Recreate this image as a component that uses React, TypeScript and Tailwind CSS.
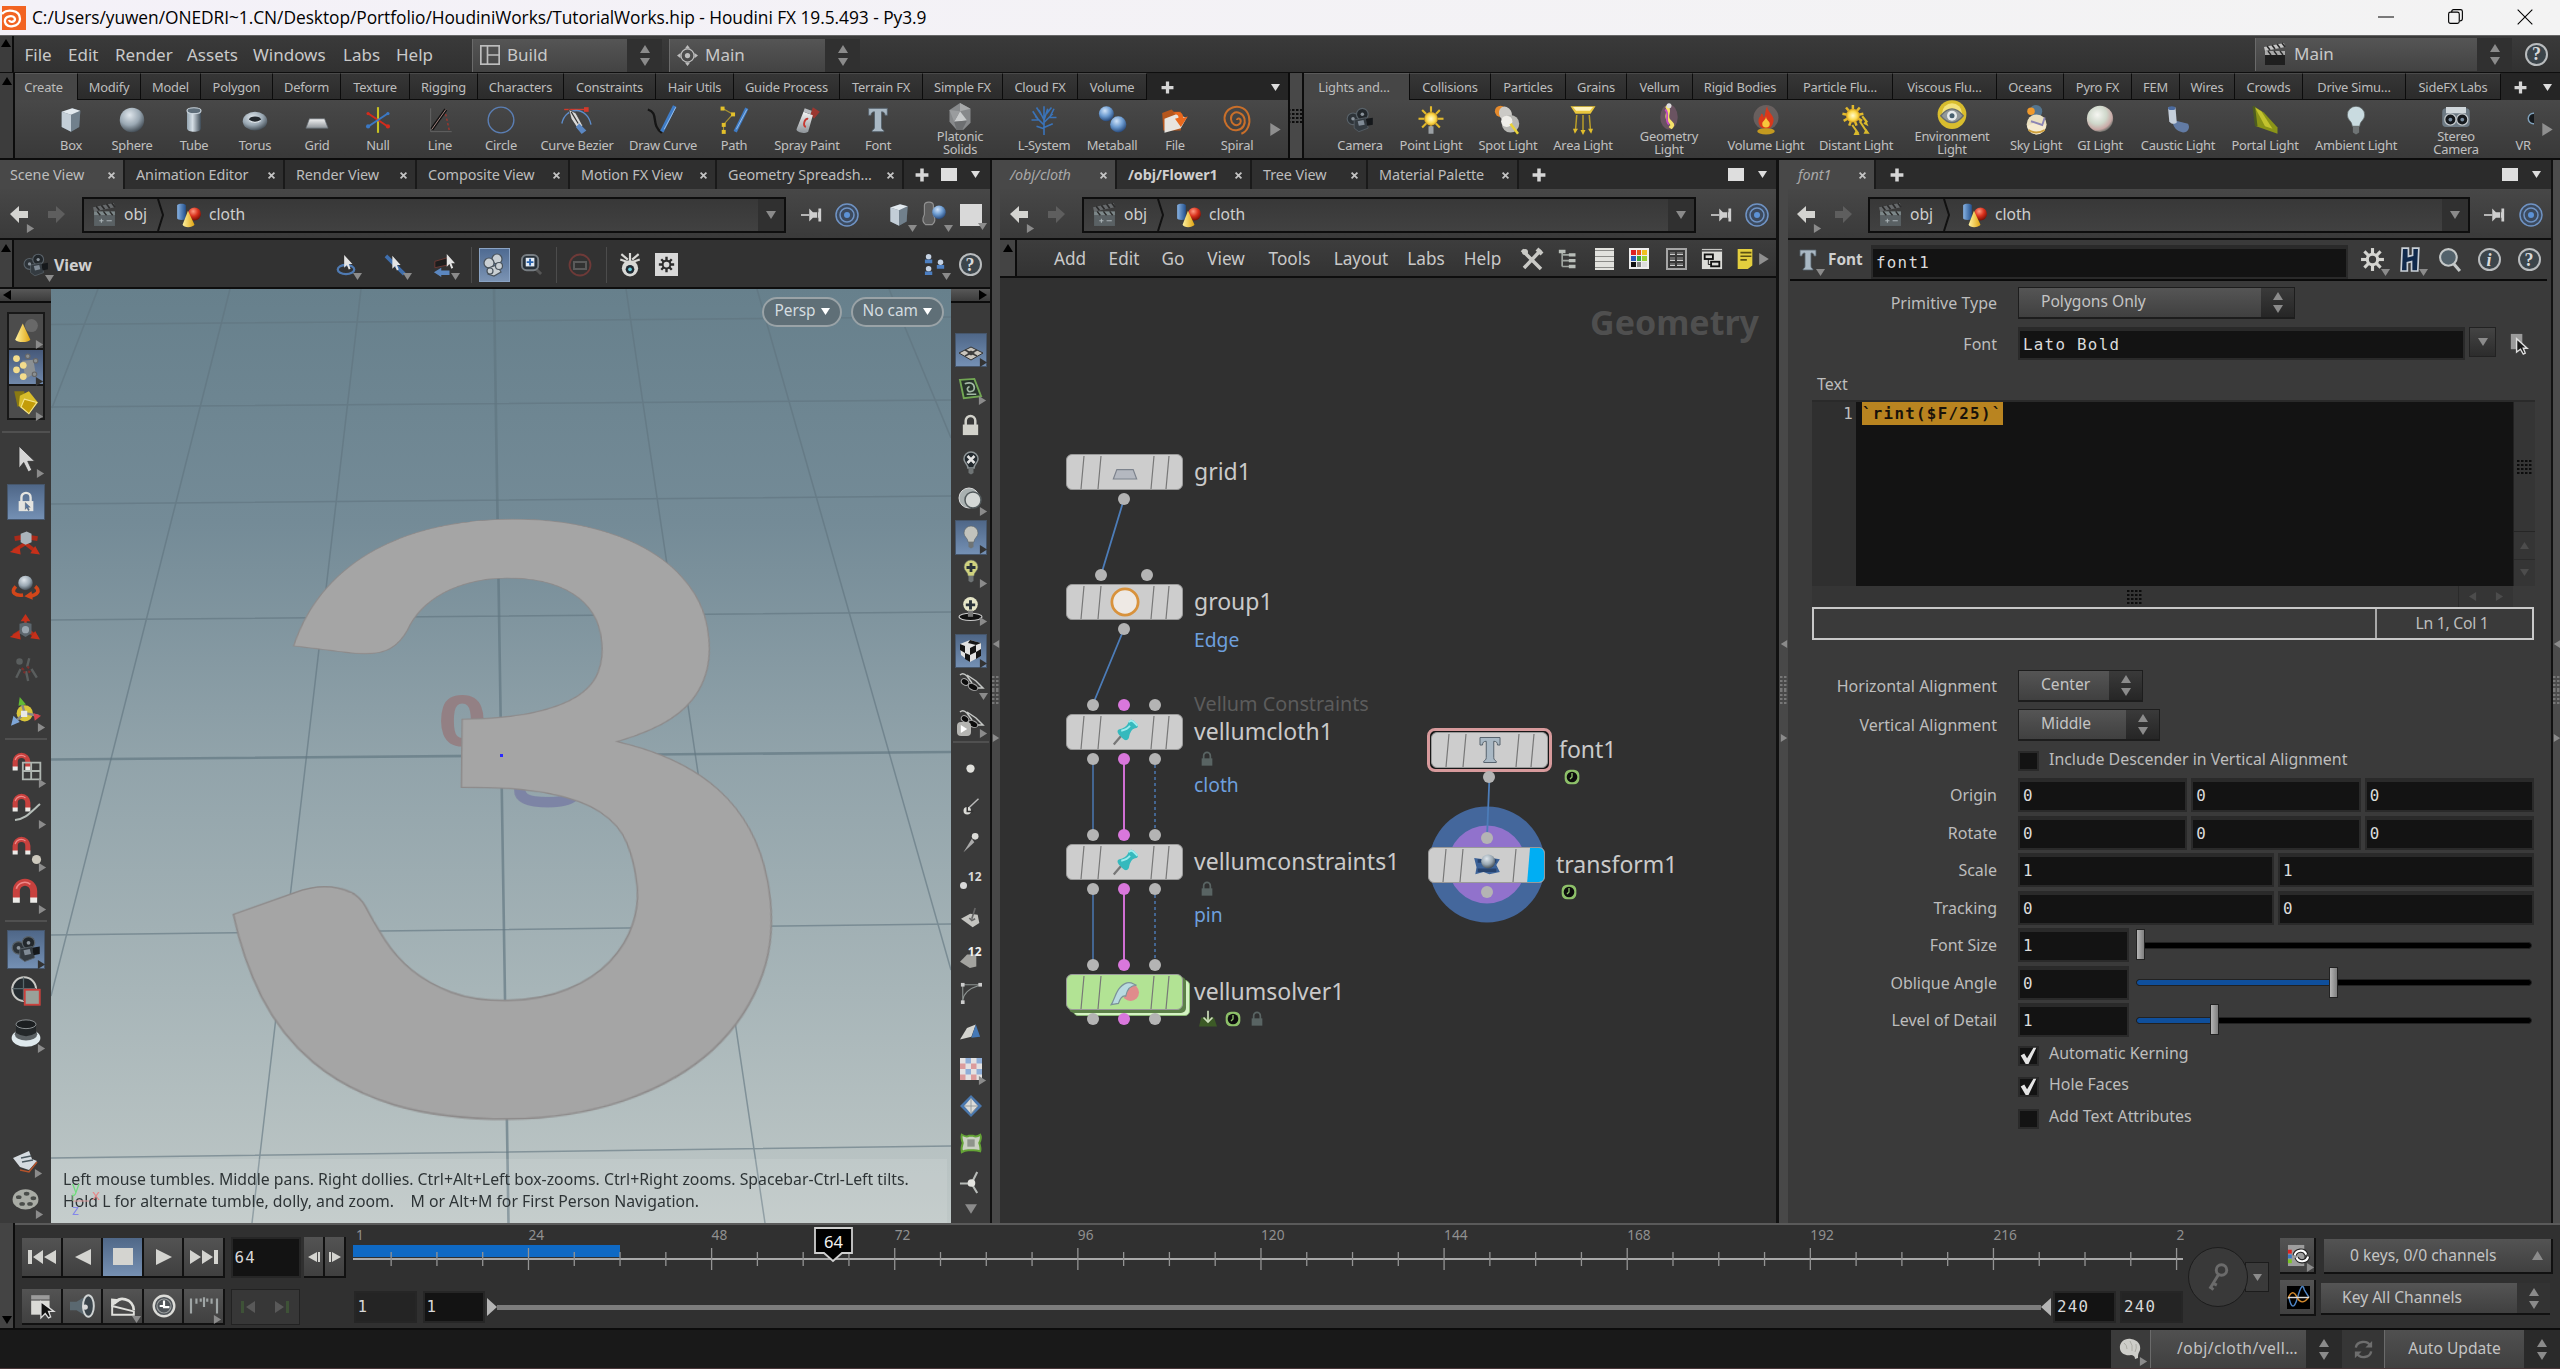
import React from "react";

type N = React.ReactNode;

/* ---------- drawing helpers ---------- */

const Ic = ({ s = 28, children }: { s?: number; children: N }) => (
  <svg width={s} height={s} viewBox="0 0 24 24" className="shrink-0 overflow-visible" fill="none">
    {children}
  </svg>
);

const Defs = () => (
  <svg width="0" height="0" className="absolute">
    <defs>
      <radialGradient id="ball" cx=".4" cy=".3" r=".75">
        <stop offset="0" stopColor="#dfe6ec" />
        <stop offset=".55" stopColor="#9aa8b3" />
        <stop offset="1" stopColor="#39424a" />
      </radialGradient>
      <radialGradient id="blueball" cx=".4" cy=".3" r=".75">
        <stop offset="0" stopColor="#cfe2f8" />
        <stop offset=".5" stopColor="#6c9bd0" />
        <stop offset="1" stopColor="#1f3f70" />
      </radialGradient>
      <radialGradient id="redball" cx=".4" cy=".3" r=".75">
        <stop offset="0" stopColor="#ff9a80" />
        <stop offset=".5" stopColor="#d9301c" />
        <stop offset="1" stopColor="#6a0c04" />
      </radialGradient>
      <radialGradient id="yball" cx=".5" cy=".5" r=".55">
        <stop offset="0" stopColor="#fffbd0" />
        <stop offset=".6" stopColor="#fbd84a" />
        <stop offset="1" stopColor="#c88c12" />
      </radialGradient>
      <radialGradient id="giball" cx=".4" cy=".35" r=".7">
        <stop offset="0" stopColor="#f6f6f2" />
        <stop offset=".5" stopColor="#cfd8cb" />
        <stop offset=".8" stopColor="#c9a9a6" />
        <stop offset="1" stopColor="#54605a" />
      </radialGradient>
      <linearGradient id="steel" x1="0" x2="1">
        <stop offset="0" stopColor="#93a4b0" />
        <stop offset=".4" stopColor="#d5dee5" />
        <stop offset="1" stopColor="#3d4a55" />
      </linearGradient>
      <linearGradient id="silver" x1="0" y1="0" x2="0" y2="1">
        <stop offset="0" stopColor="#f4f4f4" />
        <stop offset="1" stopColor="#8e9499" />
      </linearGradient>
      <linearGradient id="bluecyl" x1="0" x2="1">
        <stop offset="0" stopColor="#87b3e4" />
        <stop offset="1" stopColor="#23508c" />
      </linearGradient>
      <linearGradient id="cone" x1="0" x2="1">
        <stop offset="0" stopColor="#fff2a0" />
        <stop offset="1" stopColor="#e0a411" />
      </linearGradient>
      <linearGradient id="sky" x1="0" y1="0" x2="0" y2="1">
        <stop offset="0" stopColor="#67808c" />
        <stop offset=".25" stopColor="#748b97" />
        <stop offset=".5" stopColor="#91a3aa" />
        <stop offset=".75" stopColor="#a7b5b8" />
        <stop offset="1" stopColor="#bfc8c7" />
      </linearGradient>
    </defs>
  </svg>
);

const Tri = ({ d = "r", s = 8, c = "#8b8b8b" }: { d?: "r" | "l" | "u" | "d"; s?: number; c?: string }) => {
  const p = { r: "1,0 9,5 1,10", l: "9,0 1,5 9,10", u: "0,9 5,1 10,9", d: "0,1 10,1 5,9" }[d];
  return (
    <svg width={s} height={s} viewBox="0 0 10 10" className="shrink-0" preserveAspectRatio="none">
      <polygon points={p} fill={c} />
    </svg>
  );
};

/* An icon with a small menu marker in its lower right corner. */
const Menu = ({ children, d = "r", c = "#8b8b8b" }: { children: N; d?: "r" | "d"; c?: string }) => (
  <span className="relative flex items-center justify-center">
    {children}
    <span className="absolute -right-[5px] -bottom-[5px]">
      <Tri d={d} s={9} c={c} />
    </span>
  </span>
);

/* Lays children out on given centre lines inside a flex row or column. */
const Track = ({ at, from = 0, children, start, className = "" }: { at: number[]; from?: number; children: N; start?: boolean; className?: string }) => (
  <div className={"flex items-center " + className}>
    {React.Children.toArray(children).map((c, i) => (
      <div
        key={i}
        className={"flex w-0 shrink-0 items-center whitespace-nowrap [&>*]:shrink-0 " + (start ? "justify-start" : "justify-center")}
        style={{ marginLeft: at[i] - (i ? at[i - 1] : from) }}
      >
        {c}
      </div>
    ))}
  </div>
);

const VTrack = ({ at, from = 0, children, className = "" }: { at: number[]; from?: number; children: N; className?: string }) => (
  <div className={"flex flex-col items-center " + className}>
    {React.Children.toArray(children).map((c, i) => (
      <div key={i} className="flex h-0 shrink-0 items-center justify-center [&>*]:shrink-0" style={{ marginTop: at[i] - (i ? at[i - 1] : from) }}>
        {c}
      </div>
    ))}
  </div>
);

/* ---------- icons ---------- */

const Cube = ({ s = 28 }: { s?: number }) => (
  <Ic s={s}>
    <path d="M4 5l9-3 7 2-1 14-7 4-8-4z" fill="#55626d" />
    <path d="M4 5l8 2.500v14.500l-8-4z" fill="#c3ced7" />
    <path d="M12 7.500l8-3.500-1 14-7 4z" fill="#71808c" />
    <path d="M4 5l9-3 7 2-8 3.500z" fill="#e2e9ee" />
  </Ic>
);
const Sphere = () => (<Ic><circle cx="12" cy="12" r="10.500" fill="url(#ball)" /></Ic>);
const Tube = () => (
  <Ic>
    <path d="M6 4v15c0 4 12 4 12 0V4z" fill="url(#steel)" />
    <ellipse cx="12" cy="4" rx="6" ry="2.500" fill="#5e6d79" stroke="#c8d2da" strokeWidth="1" />
  </Ic>
);
const Torus = () => (
  <Ic>
    <ellipse cx="12" cy="13" rx="10.500" ry="8" fill="url(#ball)" />
    <ellipse cx="12" cy="11.500" rx="5" ry="2.500" fill="#23282d" />
    <path d="M7 12.500q5 3 10 0" stroke="#dde4ea" />
  </Ic>
);
const GridIc = () => (<Ic><path d="M5.500 11h13l3 8h-19z" fill="url(#silver)" stroke="#636b72" strokeWidth=".6" /></Ic>);
const NullIc = () => (
  <Ic>
    <path d="M12 1v22" stroke="#c7c224" strokeWidth="1.800" />
    <path d="M3 6l18 12" stroke="#d32b1c" strokeWidth="1.800" />
    <path d="M3 18L21 6" stroke="#3b78c4" strokeWidth="1.800" />
    <circle cx="3.500" cy="6.500" r="1.400" fill="#d32b1c" /><circle cx="20.500" cy="17.500" r="1.800" fill="#d32b1c" />
    <circle cx="3.500" cy="17.500" r="1.800" fill="#3b78c4" /><circle cx="20.500" cy="6.500" r="1.400" fill="#3b78c4" />
  </Ic>
);
const LineIc = () => (
  <Ic>
    <path d="M4 2v20h18" stroke="#6b6b6b" strokeWidth=".7" />
    <path d="M16 3l4 18" stroke="#b3342a" strokeDasharray="2 2" />
    <path d="M5 20L17 3" stroke="#111" strokeWidth="3" /><path d="M5 20L17 3" stroke="#b08f8b" strokeWidth=".8" />
  </Ic>
);
const CircleIc = () => (<Ic><circle cx="12" cy="12" r="11" stroke="#5b7fb5" strokeWidth="1.200" /></Ic>);
const BezierIc = () => (
  <Ic>
    <path d="M1 3h20" stroke="#d33a2b" strokeWidth="1.200" /><rect x="18" y="1" width="4" height="4" fill="#d33a2b" />
    <path d="M-1 15C2 0 21 0 24 16" stroke="#5e8cc9" strokeWidth="1.200" />
    <path d="M5 3l6 3 6 11-4 3-6-9z" fill="#d8d8d8" stroke="#333" strokeWidth=".6" />
    <path d="M7 5l6 10" stroke="#333" strokeWidth="1" />
    <path d="M14 15l6 6-4 3-5-6z" fill="#5b87c2" />
  </Ic>
);
const DrawIc = () => (
  <Ic>
    <path d="M-1 3c10 3 2 13 12 20" stroke="#151515" strokeWidth="2" />
    <path d="M22 0l-11 22" stroke="#3f7cc6" strokeWidth="3.200" /><path d="M23 1L13 20" stroke="#9cc2ec" strokeWidth=".8" />
  </Ic>
);
const PathIc = () => (
  <Ic>
    <path d="M2 2l9 5-8 9v6" stroke="#a99433" strokeWidth="1" />
    {[[2, 2], [11, 7], [3, 16], [3, 22]].map(([x, y]) => (<rect key={y} x={x - 1.500} y={y - 1.500} width="3.400" height="3.400" fill="#e3c02a" />))}
    <path d="M23 2L13 22" stroke="#3f7cc6" strokeWidth="3" /><path d="M23 3L14 20" stroke="#9cc2ec" strokeWidth=".8" />
  </Ic>
);
const SprayIc = () => (
  <Ic>
    <path d="M17 1l6 4-5 6-3-4z" fill="#b0332c" opacity=".8" />
    <path d="M9 5l8 3-4 14c-3 2-10 1-10-2z" fill="url(#silver)" /><path d="M10 2l6 2-1 3-6-2z" fill="#b9bcc0" />
    <path d="M13 11c-3-1-5 6-2 7" stroke="#c63a33" strokeWidth="1.600" />
  </Ic>
);
const TIc = ({ s = 28 }: { s?: number }) => (
  <Ic s={s}>
    <path d="M4 2h16v6h-2c0-2-1-3-3-3v13c0 2 1 2 2 3v1H7v-1c1-1 2-1 2-3V5C7 5 6 6 6 8H4z" fill="#a9b8c4" stroke="#56626c" strokeWidth=".8" />
  </Ic>
);
const PlatIc = () => (
  <Ic>
    <path d="M12 0l9 5v12l-6 6H9l-6-7V6z" fill="#87898b" />
    <path d="M12 7l6 8-11 1z" fill="#c9cbcc" /><path d="M12 0l9 5-9 2z" fill="#a7a9aa" /><path d="M3 6l9 1-5 9z" fill="#9a9c9e" />
    <path d="M7 16l11-1-4 8H9z" fill="#6d6f71" />
  </Ic>
);
const LSysIc = () => (
  <Ic s={30}>
    <path d="M12 24V12M12 16L5 9M12 14l7-7M12 12L8 4M12 12l3-9M8 12H2M7 11L3 5M10 8L6 2M16 10h6M17 9l3-6M14 7l4-5M12 19l-6-2M12 18l7-3M12 12V1" stroke="#3a73b8" strokeWidth="1.300" />
  </Ic>
);
const MetaIc = () => (<Ic s={30}><circle cx="7.500" cy="7" r="6" fill="url(#blueball)" /><circle cx="17" cy="15.500" r="6.500" fill="url(#blueball)" /></Ic>);
const FileIc = () => (
  <Ic>
    <path d="M1 6l8-3 2 2 6 0v16H2z" fill="#b5561c" />
    <path d="M3 11l10-4 9 3-5 9-14 4z" fill="#e8e4de" /><path d="M10 6c6-2 9 0 9 4l4-1-6 9-5-7 3-1c0-2-1-3-5-4z" fill="#e8681d" />
  </Ic>
);
const SpiralIc = () => (
  <Ic s={30}>
    <path d="M12 12c0-2 3-1.500 3 1s-3 4-5.500 2.500S6 9 9 6.800s8 0 9 4.200-1 8-5.500 9S4 18 2.500 13.500 3 4 8.500 2 20 3 21.500 9s-1 12-6 14" stroke="#c96f2a" strokeWidth="1.600" />
  </Ic>
);
const CamIc = ({ s = 28 }: { s?: number }) => (
  <Ic s={s}>
    <circle cx="6" cy="11" r="5" fill="#2d3338" stroke="#596269" /><circle cx="14" cy="7" r="5" fill="#22272b" stroke="#596269" />
    <path d="M7 12l10-2 2 9-8 3-4-3z" fill="#343b41" stroke="#596269" strokeWidth=".7" /><path d="M17 11l6-1v6l-5 1z" fill="#15181b" />
    <path d="M10 13l5-1 1 4-5 1z" fill="#808b96" /><circle cx="6" cy="11" r="1.500" fill="#8a939b" /><circle cx="14" cy="7" r="1.500" fill="#8a939b" />
  </Ic>
);
const SunIc = ({ base }: { base?: boolean }) => (
  <Ic s={30}>
    {Array.from({ length: 8 }, (_, i) => (
      <path key={i} d="M12 5.500V1" stroke="#e2b92c" strokeWidth="1.700" transform={"rotate(" + i * 45 + " 12 11)"} />
    ))}
    <circle cx="12" cy="11" r="5.500" fill="url(#yball)" />{base && <path d="M10 17h4v6h-4z" fill="#9ba0a4" />}
  </Ic>
);
const SpotIc = () => (
  <Ic s={30}>
    <circle cx="6" cy="5" r="4.500" fill="#e58a2c" /><ellipse cx="10" cy="7" rx="5" ry="6" fill="#cbcac6" transform="rotate(-30 10 7)" />
    <circle cx="14" cy="15" r="7" fill="#b8b8b4" /><circle cx="11" cy="13" r="4.500" fill="#efeee9" /><path d="M14 15l6 8" stroke="#e9d238" strokeWidth="2" />
  </Ic>
);
const AreaIc = () => (
  <Ic s={30}>
    <path d="M2 1h20l-4 6H6z" fill="#e9c63d" /><path d="M4 1.500h16l-2.500 3h-11z" fill="#fff4bd" />
    <path d="M7 8l-1 12M12 8v13M17 8l1 12" stroke="#b99d28" strokeWidth="1.200" />
    <path d="M4 19h4L5.500 23zM10 20h4L12 24zM16 19h4L18.500 23z" fill="#e0bd2c" />
  </Ic>
);
const GeoLightIc = () => (
  <Ic s={30}>
    <ellipse cx="12" cy="12" rx="7" ry="10" fill="#6a5361" /><path d="M10 3c4 4-2 8 2 12s3 3 1 6" stroke="#f6e36a" strokeWidth="3" />
    <path d="M9 6c4 4-1 8 3 12" stroke="#c04bc0" strokeWidth="1.500" /><circle cx="12" cy="3" r="2" fill="#ddd" />
  </Ic>
);
const FireIc = () => (
  <Ic s={30}>
    <circle cx="12" cy="10" r="10" fill="#8b7a78" opacity=".5" />
    <path d="M13 1c0 5 6 7 5 12s-3 6-6 6-6-2-6-6 2-3 2-6c2 0 2 2 2 3 2-2 1-6 3-9z" fill="#d8381b" />
    <path d="M12 9c0 3 3 4 3 6s-1 3-3 3-3-1-3-3 3-3 3-6z" fill="#f8c63b" /><ellipse cx="12" cy="21" rx="7" ry="2.500" fill="#c49a20" />
  </Ic>
);
const DistIc = () => (
  <Ic s={30}>
    {Array.from({ length: 9 }, (_, i) => (<path key={i} d="M9.500 4V0" stroke="#e2b92c" strokeWidth="2" transform={"rotate(" + i * 40 + " 9.500 8.500)"} />))}
    <circle cx="9.500" cy="8.500" r="5.500" fill="url(#yball)" /><path d="M17 9l4 5M15 13l6 9M9 16l5 7" stroke="#d9b92c" strokeWidth="1.700" />
    <path d="M20 12l2 5-4-2zM20 19l3 4h-5zM12 20l3 4h-5z" fill="#d9b92c" />
  </Ic>
);
const EnvIc = () => (
  <Ic s={30}>
    <circle cx="12" cy="10" r="11.500" fill="#d8bd2e" /><circle cx="12" cy="9" r="8" fill="#f3e27a" /><path d="M3 11q9-11 18 0-9 11-18 0z" fill="#92989a" stroke="#666c6f" />
    <circle cx="12" cy="11" r="4" fill="#e7ebec" /><circle cx="12" cy="11" r="2" fill="#48606f" />
  </Ic>
);
const SkyIc = () => (
  <Ic s={30}>
    <circle cx="12" cy="5" r="5" fill="#54748e" /><circle cx="8" cy="5" r="3" fill="#f0992b" /><circle cx="12.500" cy="15.500" r="8" fill="#e9dfc0" />
    <path d="M5 17q7-5 15-1-1 7-8 7.500-5-1-7-6.500z" fill="#f5ead0" /><path d="M8 13l9 3 2-6" stroke="#8c86b4" strokeWidth="1.500" /><path d="M6 20q6 4 13 0" stroke="#cc9e3c" strokeWidth="1.500" />
  </Ic>
);
const GiIc = () => (<Ic s={30}><circle cx="12" cy="11" r="10.500" fill="url(#giball)" /></Ic>);
const CausIc = () => (
  <Ic s={30}>
    <path d="M8 12l12 3c2 3 0 7-4 7-5-1-9-5-8-10z" fill="#6d8fc6" opacity=".75" /><path d="M4 2h6l1 12c-2 2-5 1-6-1z" fill="#c5cfdb" />
    <ellipse cx="7" cy="2.500" rx="3" ry="1.500" fill="#4b6ba0" />
  </Ic>
);
const PortIc = () => (<Ic s={30}><path d="M3 1l8 5 11 12v5L5 17z" fill="#8a9418" /><path d="M4 2l5 3 9 14-6-2z" fill="#c2c22e" /><path d="M3 1l2 16" stroke="#4c5d1f" strokeWidth="2" /></Ic>);
const BulbIc = ({ s = 30, f = "#c9dbe0", line = "#5b6163", lw = 0.6, x }: { s?: number; f?: string; line?: string; lw?: number; x?: N }) => (
  <Ic s={s}>
    <path d="M12 1a7 7 0 0 0-7 7c0 4 4 5 4 9h6c0-4 4-5 4-9a7 7 0 0 0-7-7z" fill={f} stroke={line} strokeWidth={lw} />
    <path d="M9.500 17h5v5l-2.500 1.500L9.500 22z" fill="#6f7475" />{x}
  </Ic>
);
const StereoIc = () => (
  <Ic s={30}>
    <rect x="1" y="5" width="22" height="15" rx="3" fill="#6c7983" /><rect x="4" y="4" width="16" height="5" fill="#cfd6da" />
    <circle cx="7.500" cy="14" r="4.500" fill="#15191d" stroke="#c4c9cc" /><circle cx="17" cy="14" r="4.500" fill="#15191d" stroke="#c4c9cc" />
    <circle cx="7.500" cy="14" r="1.500" fill="#7b8ea0" /><circle cx="17" cy="14" r="1.500" fill="#7b8ea0" />
  </Ic>
);
const Plus = ({ s = 15 }: { s?: number }) => (<Ic s={s}><path d="M12 1v22M1 12h22" stroke="#d6d6d6" strokeWidth="6" /></Ic>);
const HelpIc = ({ ch = "?" }: { ch?: string }) => (
  <span className={"flex size-[23px] items-center justify-center rounded-full border-2 border-[#b9bcbe] bg-[#3b444a] font-['Liberation_Serif',serif] text-[18px] leading-none font-bold text-[#d8dadb] " + (ch === "i" ? "italic" : "")}>{ch}</span>
);
const Back = ({ dim }: { dim?: boolean }) => (
  <Ic s={24}><path d={dim ? "M21 11l-9-8v5H4v7h8v5z" : "M2 11l9-8v5h9v7h-9v5z"} fill={dim ? "#5e5e5e" : "#d3d3d0"} /></Ic>
);
const ClapIc = ({ s = 26, lit }: { s?: number; lit?: boolean }) => (
  <Ic s={s}>
    <path d="M1 5l20-4 1 4-20 4z" fill={lit ? "#c4c4c4" : "#66696b"} /><path d="M4 4l3 4M9 3l3 4M14 2l3 4M19 1l3 4" stroke="#2b2b2b" strokeWidth="1.600" />
    <rect x="2" y="9" width="20" height="4" fill={lit ? "#aaa" : "#7d888a"} /><path d="M5 9l3 4M11 9l3 4M17 9l3 4" stroke="#2b2b2b" strokeWidth="1.400" />
    <rect x="2" y="13" width="20" height="10" fill={lit ? "#1f1f1f" : "#5a6164"} />{!lit && <path d="M9 16v4M7 18h4M14 18h5" stroke="#aab3b6" />}
  </Ic>
);
const ShapesIc = () => (
  <Ic s={26}>
    <path d="M2 3v12c0 2 8 2 8 0V3c0-2-8-2-8 0z" fill="url(#bluecyl)" /><circle cx="18" cy="11" r="6" fill="url(#redball)" />
    <path d="M12 8l6 13c-2 3-10 3-11 0z" fill="url(#cone)" />
  </Ic>
);
const PinIc = () => (<Ic s={22}><path d="M0 12h9" stroke="#cfcfcf" strokeWidth="1.800" /><path d="M9 5l4 4h6V5h3v14h-3v-4h-6l-4 4z" fill="#cfcfcf" /><path d="M18 8v8" stroke="#555" strokeWidth="1" /></Ic>);
const TargetIc = () => (
  <Ic s={24}><circle cx="12" cy="12" r="11" fill="#3c4a5e" stroke="#6f93c4" strokeWidth="1.500" /><circle cx="12" cy="12" r="7" stroke="#6f93c4" strokeWidth="1.500" /><circle cx="12" cy="12" r="3" fill="#5c92d6" /></Ic>
);
const LockIc = ({ s = 24, c = "#e4e4e0" }: { s?: number; c?: string }) => (
  <Ic s={s}><path d="M7 12V7a5 5 0 0 1 10 0v5" stroke={c} strokeWidth="2.600" /><rect x="4" y="11" width="16" height="11" fill={c} /></Ic>
);
const Magnet = ({ s = 20 }: { s?: number }) => (
  <Ic s={s}>
    <path d="M4 18V11a8 8 0 0 1 16 0v7" stroke="#c8413e" strokeWidth="6.500" /><path d="M4 9a8 8 0 0 1 13-4" stroke="#e88" strokeWidth="1.500" />
    <path d="M.8 17h6.400v5H.8zM16.800 17h6.400v5h-6.400z" fill="#ecebe8" />
  </Ic>
);
const Arrow = ({ s = 26, c = "#d4d4d4" }: { s?: number; c?: string }) => (<Ic s={s}><path d="M6 1v19l4-5 4 8 3-1.500-3.500-7.500h6z" fill={c} stroke="#333" strokeWidth=".7" /></Ic>);
const Updown = () => (
  <span className="flex flex-col items-center gap-[3px]"><Tri d="u" s={10} /><Tri d="d" s={10} /></span>
);
const Grip = ({ dark }: { dark?: boolean }) => (
  <svg width="16" height="14" viewBox="0 0 16 14" className="shrink-0">
    {[0, 4, 8, 12].map((x) => [0, 4, 8, 12].map((y) => (<rect key={x + "-" + y} x={x} y={y} width="2.500" height="2" fill={dark ? "#0c0c0c" : "#777"} />)))}
  </svg>
);

/* ---------- top bars ---------- */

const TitleBar = () => (
  <div className="flex h-[35px] shrink-0 items-center bg-gradient-to-r from-[#f4f1f8] to-[#f3f3f3] text-black">
    <div className="ml-[2px] flex h-[24px] w-[24px] items-center justify-center overflow-hidden bg-[#f26322]">
      <Ic s={24}><path d="M0 8c4-5 18-5 18 5 0 8-14 10-15 3-1-6 9-8 10-3 0 3-5 4-6 1" stroke="#fff" strokeWidth="2.300" /></Ic>
    </div>
    <span className="ml-[6px] font-['Open_Sans',sans-serif] text-[17.35px] tracking-[-0.05px]">
      C:/Users/yuwen/ONEDRI~1.CN/Desktop/Portfolio/HoudiniWorks/TutorialWorks.hip - Houdini FX 19.5.493 - Py3.9
    </span>
    <div className="mr-[27px] ml-auto flex items-center gap-[54px] pb-[2px]">
      <Ic s={16}><path d="M0 12h24" stroke="#000" strokeWidth="1.500" /></Ic>
      <Ic s={15}><rect x="1" y="5" width="17" height="18" rx="3" stroke="#000" strokeWidth="1.800" /><path d="M6 5V4q0-3 3-3h11q3 0 3 3v11q0 4-4 4" stroke="#000" strokeWidth="1.800" /></Ic>
      <Ic s={16}><path d="M1 1l22 22M23 1L1 23" stroke="#000" strokeWidth="1.600" /></Ic>
    </div>
  </div>
);

const Combo = ({ icon, text, w, h = "h-[33px]" }: { icon: N; text: string; w: string; h?: string }) => (
  <div className={"flex shrink-0 items-stretch " + w + " " + h}>
    <div className="flex flex-1 items-center gap-[7px] border-l border-[#6a6a6a] bg-gradient-to-b from-[#555] to-[#434343] pl-[7px] text-[17px]">{icon}{text}</div>
    <div className="flex w-[35px] items-center justify-center bg-[#303030]"><Updown /></div>
  </div>
);

const MenuBar = () => (
  <div className="flex h-[38px] shrink-0 items-center border-t border-b border-t-[#666] border-b-[#0e0e0e] bg-gradient-to-b from-[#3a3a3a] to-[#313131]">
    <div className="flex h-full w-[14px] items-start justify-center border-r-2 border-[#0c0c0c] bg-[#3c3c3c] pt-[2px]"><Tri d="u" s={10} c="#000" /></div>
    <Track at={[24.500, 68, 115, 187, 253, 343, 396]} from={14} start className="w-[458px] pt-px text-[17px] text-[#c9c9c9]">
      {["File", "Edit", "Render", "Assets", "Windows", "Labs", "Help"].map((m) => (<span key={m}>{m}</span>))}
    </Track>
    <div className="flex pt-[2px]">
      <Combo w="w-[190px]" text="Build" icon={<Ic s={20}><rect x="1" y="1" width="22" height="22" stroke="#bdbdbd" strokeWidth="2" /><path d="M9 1v22M9 12h14" stroke="#bdbdbd" strokeWidth="2" /></Ic>} />
      <span className="w-[7px]" />
      <Combo w="w-[191px]" text="Main" icon={<Ic s={21}><circle cx="12" cy="12" r="7.500" stroke="#bdbdbd" strokeWidth="1.500" /><circle cx="12" cy="12" r="3" fill="#bdbdbd" /><path d="M12 0l3 4H9zM12 24l3-4H9zM0 12l4-3v6zM24 12l-4-3v6z" fill="#bdbdbd" /></Ic>} />
    </div>
    <div className="ml-auto flex items-center">
      <Combo w="w-[257px]" text="Main" icon={<ClapIc s={24} lit />} />
      <span className="mr-[12px] ml-[13px]"><HelpIc /></span>
    </div>
  </div>
);

type Tab = [string, number];
const ShelfTabs = ({ tabs, plus }: { tabs: Tab[]; plus: string }) => (
  <div className="flex h-[27px] bg-[#252525] text-[12.9px] tracking-[-0.2px] text-[#bdbdbd]">
    {tabs.map(([t, w], i) => (
      <div
        key={t}
        className={"flex shrink-0 items-center justify-center border-t border-r border-r-[#0c0c0c] pt-[2px] " + (i ? "border-b border-t-[#4a4a4a] border-b-[#0c0c0c] bg-gradient-to-b from-[#363636] to-[#2b2b2b]" : "border-t-[#5a5a5a] bg-[#464646] pr-[5px]")}
        style={{ width: w }}
      >
        {t}
      </div>
    ))}
    <div className={"flex items-center justify-between pt-[2px] " + plus}><Plus s={13} /><Tri d="d" s={9} c="#ddd" /></div>
  </div>
);

const Tool = ({ icon, text }: { icon: N; text: string }) => {
  const two = text.includes("|");
  return (
    <div className={"flex h-[58px] flex-col items-center text-[12.9px] leading-[13px] tracking-[-0.25px] text-[#c0c0c0] " + (two ? "pt-[4px]" : "pt-[6px]")}>
      <div className={"flex items-center " + (two ? "h-[26px]" : "h-[28px]")}>{icon}</div>
      <div className={"text-center " + (two ? "leading-[13px]" : "mt-[5px]")}>{text.split("|").map((l) => (<div key={l}>{l}</div>))}</div>
    </div>
  );
};

const Shelves = () => (
  <div className="flex h-[87px] shrink-0 border-b-2 border-[#0c0c0c]">
    <div className="flex w-[15px] items-start justify-center border-r-2 border-[#0c0c0c] bg-[#3c3c3c] pt-[3px]"><Tri d="u" s={10} c="#000" /></div>
    <div className="w-[1273px]">
      <ShelfTabs
        tabs={[["Create", 63], ["Modify", 63], ["Model", 60], ["Polygon", 72], ["Deform", 68], ["Texture", 69], ["Rigging", 68], ["Characters", 86], ["Constraints", 92], ["Hair Utils", 78], ["Guide Process", 106], ["Terrain FX", 83], ["Simple FX", 80], ["Cloud FX", 75], ["Volume", 69]]}
        plus="ml-[14px] mr-[8px] w-[119px]"
      />
      <div className="bg-gradient-to-b from-[#484848] to-[#393939]">
        <Track from={15} at={[71, 132, 194, 255, 317, 378, 440, 501, 577, 663, 734, 807, 878, 960, 1044, 1112, 1175, 1237, 1275]}>
          <Tool icon={<Cube />} text="Box" />
          <Tool icon={<Sphere />} text="Sphere" />
          <Tool icon={<Tube />} text="Tube" />
          <Tool icon={<Torus />} text="Torus" />
          <Tool icon={<GridIc />} text="Grid" />
          <Tool icon={<NullIc />} text="Null" />
          <Tool icon={<LineIc />} text="Line" />
          <Tool icon={<CircleIc />} text="Circle" />
          <Tool icon={<BezierIc />} text="Curve Bezier" />
          <Tool icon={<DrawIc />} text="Draw Curve" />
          <Tool icon={<PathIc />} text="Path" />
          <Tool icon={<SprayIc />} text="Spray Paint" />
          <Tool icon={<TIc />} text="Font" />
          <Tool icon={<PlatIc />} text="Platonic|Solids" />
          <Tool icon={<LSysIc />} text="L-System" />
          <Tool icon={<MetaIc />} text="Metaball" />
          <Tool icon={<FileIc />} text="File" />
          <Tool icon={<SpiralIc />} text="Spiral" />
          <Tri s={13} c="#8f8f8f" />
        </Track>
      </div>
    </div>
    <div className="flex w-[16px] items-center justify-center border-x-2 border-[#0c0c0c] bg-[#484848]"><Grip dark /></div>
    <div className="w-[1256px]">
      <ShelfTabs
        tabs={[["Lights and…", 106], ["Collisions", 81], ["Particles", 75], ["Grains", 61], ["Vellum", 66], ["Rigid Bodies", 95], ["Particle Flu…", 105], ["Viscous Flu…", 104], ["Oceans", 67], ["Pyro FX", 68], ["FEM", 48], ["Wires", 55], ["Crowds", 68], ["Drive Simu…", 103], ["SideFX Labs", 95]]}
        plus="ml-[13px] w-[38px]"
      />
      <div className="flex bg-gradient-to-b from-[#484848] to-[#393939]">
        <div className="w-[1230px] overflow-hidden">
          <Track from={1304} at={[1360, 1431, 1508, 1583, 1669, 1766, 1856, 1952, 2036, 2100, 2178, 2265, 2356, 2456, 2538]}>
            <Tool icon={<CamIc />} text="Camera" />
            <Tool icon={<SunIc base />} text="Point Light" />
            <Tool icon={<SpotIc />} text="Spot Light" />
            <Tool icon={<AreaIc />} text="Area Light" />
            <Tool icon={<GeoLightIc />} text="Geometry|Light" />
            <Tool icon={<FireIc />} text="Volume Light" />
            <Tool icon={<DistIc />} text="Distant Light" />
            <Tool icon={<EnvIc />} text="Environment|Light" />
            <Tool icon={<SkyIc />} text="Sky Light" />
            <Tool icon={<GiIc />} text="GI Light" />
            <Tool icon={<CausIc />} text="Caustic Light" />
            <Tool icon={<PortIc />} text="Portal Light" />
            <Tool icon={<BulbIc />} text="Ambient Light" />
            <Tool icon={<StereoIc />} text="Stereo|Camera" />
            <Tool icon={<Ic s={18}><circle cx="6" cy="10" r="7" stroke="#7fa0ba" strokeWidth="2" fill="#15191d" /></Ic>} text="VR Cam" />
          </Track>
        </div>
        <div className="flex h-[58px] w-[26px] items-center justify-center"><Tri s={13} c="#8f8f8f" /></div>
      </div>
    </div>
  </div>
);

/* ---------- pane chrome ---------- */

const PaneTabs = ({ tabs, styles, end }: { tabs: Tab[]; styles?: string[]; end: string }) => (
  <div className="flex h-[29px] shrink-0 bg-[#2b2b2b] text-[14.4px] text-[#bdbdbd]">
    {tabs.map(([t, w], i) => (
      <div
        key={t}
        className={"flex shrink-0 items-center justify-between border-r-2 border-[#1a1a1a] pt-px pr-[8px] tracking-[-0.1px] whitespace-nowrap " + (i ? "bg-[#2f2f2f] pl-[11px] " : "bg-[#484848] pl-[10px] ") + (styles?.[i] ?? "")}
        style={{ width: w }}
      >
        {t}
        <Ic s={7}><path d="M2 2l20 20M22 2L2 22" stroke="#c4c4c4" strokeWidth="6" /></Ic>
      </div>
    ))}
    <div className={"flex flex-1 items-center " + end}>
      <Plus s={14} />
      <span className="ml-auto h-[13px] w-[16px] bg-[#dedede]" />
      <span className="ml-[14px]"><Tri d="d" s={9} c="#ddd" /></span>
    </div>
  </div>
);

const PathBar = ({ lead, field, tail }: { lead: string; field: string; tail: N }) => (
  <div className="flex h-[51px] shrink-0 items-center border-b-2 border-[#0e0e0e] bg-gradient-to-b from-[#474747] to-[#3a3a3a] pt-[2px]">
    <div className={"flex shrink-0 items-center gap-[12px] " + lead}>
      <span className="relative"><Back /><span className="absolute -right-[3px] -bottom-[6px]"><Tri s={9} /></span></span>
      <Back dim />
    </div>
    <div className={"flex h-[36px] shrink-0 items-center border-2 border-[#0e0e0e] bg-gradient-to-b from-[#383838] to-[#414141] pl-[8px] text-[15.6px] text-[#cfcfcf] " + field}>
      <ClapIc s={25} />
      <span className="ml-[7px] w-[33px]">obj</span>
      <svg width="8" height="32" viewBox="0 0 8 32" fill="none"><path d="M1 0l5 16L1 32" stroke="#111" strokeWidth="2" /></svg>
      <span className="ml-[10px]"><ShapesIc /></span>
      <span className="ml-[8px]">cloth</span>
      <span className="ml-auto flex h-full w-[26px] items-center justify-center bg-[#303030]"><Tri d="d" s={10} c="#8a8a8a" /></span>
    </div>
    {tail}
  </div>
);

/* ---------- 3D viewport ---------- */

const ViewToolbar = () => (
  <div className="flex h-[49px] shrink-0 items-center border-b-2 border-[#0e0e0e] bg-[#323232]">
    <div className="flex h-full w-[14px] items-start justify-center border-r-2 border-[#0c0c0c] bg-[#404040] pt-[3px]"><Tri d="u" s={10} c="#000" /></div>
    <Track className="pt-[2px]" from={14} at={[36, 73, 346, 396, 444, 471, 494, 531, 556, 580, 606, 630, 666, 935, 970]}>
      <Menu d="d"><CamIc s={26} /></Menu>
      <span className="text-[16px] font-bold text-[#d0d0d0]">View</span>
      <Menu d="d"><Ic s={22}><ellipse cx="12" cy="17" rx="9" ry="5" stroke="#4f7ab2" strokeWidth="2.500" /><path d="M10 1v14l3-3 2 5 2-1-2-5h4z" fill="#e4e4e4" /></Ic></Menu>
      <Menu d="d"><Ic s={22}><path d="M1 2l20 20" stroke="#3f6fae" strokeWidth="4" /><path d="M8 2v14l3-3 2 5 2-1-2-5h4z" fill="#e4e4e4" /></Ic></Menu>
      <Menu d="d"><Ic s={22}><path d="M2 8l14-4v8L2 15z" fill="#1d1d1d" stroke="#703a34" /><path d="M1 20l8-5v3h9v5H9v2z" fill="#5b87c0" /><path d="M15 0v14l3-3 2 5 2-1-2-5h4z" fill="#e4e4e4" /></Ic></Menu>
      <span className="h-[36px] w-px bg-[#4c4c4c]" />
      <span className="flex h-[34px] w-[31px] items-center justify-center border border-[#8aa3c4] bg-gradient-to-b from-[#4f6b92] to-[#7b93b3]">
        <Ic s={24}><g fill="#c9cfd3" stroke="#49535c" strokeWidth="1.200"><circle cx="15" cy="6" r="5" /><circle cx="7" cy="10" r="5" /><path d="M6 15l9-3 4 7-7 4-6-2z" /><circle cx="17" cy="13" r="3.500" /><circle cx="8" cy="18" r="3" /></g></Ic>
      </span>
      <Ic s={23}><path d="M15 15l7 7" stroke="#555" strokeWidth="3" /><rect x="2" y="2" width="17" height="16" rx="5" fill="#27313a" stroke="#777d82" strokeWidth="2" /><rect x="6" y="5" width="9" height="9" fill="#e3ebf5" /><path d="M10.500 6v7M7 9.500h7" stroke="#2a65b0" strokeWidth="2" /></Ic>
      <span className="h-[36px] w-px bg-[#4c4c4c]" />
      <Ic s={24}><circle cx="12" cy="12" r="10.500" stroke="#6e3a38" strokeWidth="1.800" /><rect x="6" y="9" width="12" height="7" stroke="#5a5a5a" strokeWidth="2" /></Ic>
      <span className="h-[36px] w-px bg-[#4c4c4c]" />
      <Ic s={26}><circle cx="12" cy="15" r="7.500" fill="#d9d9d6" /><circle cx="12" cy="16" r="4" fill="#1f2a33" /><circle cx="12" cy="16" r="1.700" fill="#62c7d6" /><path d="M12 1v8M4 2l6 5M20 2l-6 5M3 7l6 2M21 7l-6 2" stroke="#d9d9d6" strokeWidth="2" /></Ic>
      <Ic s={23}><rect x="0" y="0" width="24" height="24" fill="#d8d8d8" /><path d="M12 4v16M4 12h16M6.500 6.500l11 11M17.500 6.500l-11 11" stroke="#2a2a2a" strokeWidth="2.500" /><circle cx="12" cy="12" r="4" fill="#d8d8d8" stroke="#2a2a2a" strokeWidth="2" /></Ic>
      <Menu d="d"><Ic s={22}><g fill="#c6d3e4"><circle cx="5" cy="3" r="3" /><circle cx="18" cy="9" r="3" /><circle cx="5" cy="16" r="3" /></g><path d="M1 6h8v4H1zM14 12h8v4h-8zM1 19h8v4H1z" fill="#4c7fc2" /></Ic></Menu>
      <HelpIc />
    </Track>
  </div>
);

const Strip = ({ d }: { d: "l" | "r" }) => (
  <div className={"flex h-[14px] shrink-0 items-center border-b-2 border-[#0c0c0c] bg-gradient-to-b from-[#585858] to-[#3c3c3c] px-[2px] " + (d === "r" ? "justify-end" : "")}><Tri d={d} s={10} c="#000" /></div>
);

const Active = ({ children, className = "h-[36px] w-[38px]" }: { children: N; className?: string }) => (
  <span className={"flex items-center justify-center border border-[#46566b] bg-gradient-to-b from-[#4f6788] to-[#7490b4] " + className}>{children}</span>
);

const MoveTool = ({ kind }: { kind: number }) => (
  <Ic s={29}>
    {kind === 1 ? (
      <><path d="M4 12c-5 5 0 8 6 7M20 12c5 4 1 7-4 8" stroke="#d2461a" strokeWidth="3" /><path d="M17 16l-6 4 7 3z" fill="#d2461a" /><circle cx="12" cy="9" r="6" fill="url(#ball)" /></>
    ) : (
      <>
        <path d="M12 12L2 18M12 12l9 7" stroke="#b52c18" strokeWidth="3" /><path d="M-1 19l8-5 1 7zM24 21l-8-1 4-6z" fill="#c6301a" />
        {kind === 0 ? <path d="M3 8l6-1M22 8l-7-1" stroke="#a82a1a" strokeWidth="4" /> : <path d="M12 0l4 6h-3v6h-2V6H8z" fill="#c6301a" />}
        <path d={kind === 0 ? "M8 4l5-2 4 2v7l-5 2-4-2z" : "M7 8l5-1 5 1v8l-5 3-5-3z"} fill={kind === 0 ? "#aab4bb" : "#5c666d"} /><circle cx="12" cy="13" r={kind ? 3 : 0} fill="#9aa5ae" />
      </>
    )}
  </Ic>
);

const Mag = ({ kind }: { kind: number }) => (
  <span className="relative flex h-[30px] w-[32px] items-start pl-[2px]">
    <Magnet s={kind === 3 ? 26 : 19} />
    {kind < 3 && (
      <span className="absolute right-0 bottom-[2px]">
        {kind === 0 && <Ic s={20}><path d="M1 2h21v20H1zM11 2v20M1 12h21" stroke="#aeb5b0" strokeWidth="2.200" /></Ic>}
        {kind === 1 && <Ic s={24}><path d="M-3 22c10-1 14-6 25-16" stroke="#b5bdb8" strokeWidth="2" /></Ic>}
        {kind === 2 && <Ic s={11}><circle cx="12" cy="12" r="10" fill="#ccc8bc" /></Ic>}
      </span>
    )}
  </span>
);

const LeftTools = () => (
  <div className="flex w-[51px] shrink-0 flex-col bg-[#3a3a3a]">
    <Strip d="l" />
    <VTrack from={303} at={[366, 432, 459, 502, 543, 586, 628, 669, 712, 739, 768, 809, 852, 894, 921, 949, 991, 1033, 1161, 1200]}>
      <div className="flex w-[38px] flex-col gap-[2px] border-2 border-[#181818] bg-[#181818]">
        <div className="flex h-[34px] items-center justify-center bg-[#4c4c4c]"><Menu><Ic s={26}><circle cx="17" cy="7" r="6" fill="#686868" /><path d="M9 5l7 15c-2 3-12 3-14 0z" fill="url(#cone)" /></Ic></Menu></div>
        <div className="flex h-[34px] items-center justify-center bg-gradient-to-b from-[#46597a] to-[#7189ab]"><Menu c="#333"><Ic s={27}><path d="M9 6l10-1 2 12-9 5z" fill="#8b9093" /><g fill="#f3dc8c"><circle cx="4" cy="4" r="3" /><circle cx="10" cy="10" r="3" /><circle cx="4" cy="14" r="3" /><circle cx="10" cy="20" r="3" /></g><g stroke="#666" fill="#8b9093"><circle cx="14" cy="2" r="2" /><circle cx="21" cy="6" r="2" /><circle cx="20" cy="18" r="2" /></g></Ic></Menu></div>
        <div className="flex h-[32px] items-center justify-center bg-[#4c4c4c]"><Menu><Ic s={27}><path d="M2 2h9v9l-6 5z" fill="#8a7a12" /><path d="M7 6l8-4 8 10-8 10-9-7z" fill="#d9bd2a" /><path d="M11 9l11 3-7 10-7-6z" fill="#c39c08" stroke="#f4e488" /></Ic></Menu></div>
      </div>
      <span className="h-[2px] w-[48px] bg-[#505050]" />
      <Menu><Arrow s={28} /></Menu>
      <Active><span className="relative"><LockIc s={22} /><span className="absolute top-[11px] left-[8px]"><Arrow s={9} c="#5877a0" /></span></span></Active>
      <MoveTool kind={0} />
      <MoveTool kind={1} />
      <MoveTool kind={2} />
      <Ic s={26}><circle cx="6" cy="5" r="3" fill="#5a5e5e" /><path d="M15 2l-2 8M7 12l-4 8M12 14l2 9M17 12l5 8" stroke="#5a5e5e" strokeWidth="2.200" /><path d="M8 11l2 2M13 10l2 1M10 16l1-2M16 15l-2-1" stroke="#7a2f2c" strokeWidth="2" /></Ic>
      <Menu><Ic s={30}><circle cx="11" cy="13" r="6.500" fill="#d9c53a" /><path d="M11 13L8 3M11 13l11 2M11 13l-8 7" stroke="#888" strokeWidth="2" /><path d="M7 0l5 6-6 1z" fill="#62b935" /><path d="M24 15l-5 4-1-6z" fill="#d8434c" /><path d="M0 23l2-8 5 5z" fill="#7ea6d8" /><rect x="8" y="11" width="5" height="5" fill="#e8e8e8" /></Ic></Menu>
      <span className="h-[2px] w-[42px] bg-[#505050]" />
      <Menu><Mag kind={0} /></Menu>
      <Menu><Mag kind={1} /></Menu>
      <Menu><Mag kind={2} /></Menu>
      <Menu><Mag kind={3} /></Menu>
      <span className="h-[2px] w-[42px] bg-[#505050]" />
      <Active className="h-[39px] w-[38px]"><Menu c="#333"><CamIc s={30} /></Menu></Active>
      <Ic s={30}><circle cx="10.500" cy="10.500" r="9.500" fill="#252c30" stroke="#c8c8c4" strokeWidth="1.600" /><path d="M1 10h19M10 1v19" stroke="#59676b" /><rect x="11" y="11" width="12" height="12" fill="#99a19a" stroke="#c9403c" strokeWidth="1.500" /></Ic>
      <Menu><Ic s={30}><ellipse cx="12" cy="16" rx="11.500" ry="7" fill="#dfe9ed" /><ellipse cx="12" cy="13" rx="9" ry="5" fill="#5b6164" /><path d="M4 5v7q8 5 16 0V5z" fill="#24282a" /><ellipse cx="12" cy="5" rx="8" ry="3.500" fill="#1c1f21" stroke="#8a8f91" strokeWidth=".8" /></Ic></Menu>
      <Menu><Ic s={24}><path d="M-1 9l16-7 3 8 5 2-8 9-9-3z" fill="#d5dbe0" /><path d="M6 21l9 2 8-10" stroke="#b4532b" strokeWidth="1.500" /><path d="M7 9l10-2M8 13l11-2" stroke="#4b5960" strokeWidth="1.500" /></Ic></Menu>
      <Menu><Ic s={27}><ellipse cx="12" cy="11" rx="11.500" ry="9" fill="#a9aca5" /><g fill="#4a4d4a"><ellipse cx="6" cy="9" rx="2.500" ry="1.700" /><ellipse cx="13" cy="6" rx="2.500" ry="1.700" /><ellipse cx="19" cy="10" rx="2.500" ry="1.700" /><ellipse cx="9" cy="15" rx="2.500" ry="1.700" /><ellipse cx="16" cy="15" rx="2.500" ry="1.700" /></g></Ic></Menu>
    </VTrack>
  </div>
);

const Glasses = () => (<Ic s={24}><path d="M1 3q3-3 7 1l5 7M8 3l9 6 7 7h-5" stroke="#c5c7c5" strokeWidth="1.500" /><ellipse cx="6" cy="10" rx="4" ry="3" fill="#0c0c0c" stroke="#aaa" transform="rotate(35 6 10)" /><ellipse cx="14" cy="15" rx="5" ry="3" fill="#0c0c0c" stroke="#aaa" transform="rotate(25 14 15)" /></Ic>);
const MarkPlus = <path d="M12 4v9M7.500 8.500h9" stroke="#29323a" strokeWidth="2.800" />;

const RightTools = () => (
  <div className="flex w-[39px] shrink-0 flex-col bg-[#3a3a3a]">
    <Strip d="r" />
    <VTrack from={303} at={[350, 388, 425, 463, 499, 537, 571, 608, 651, 684, 721, 742, 768, 807, 843, 880, 918, 956, 993, 1031, 1069, 1106, 1143, 1182, 1209]}>
      <Active className="h-[34px] w-[32px]"><Menu c="#333"><Ic s={24}><path d="M0 15l12-6 12 6-12 7z" fill="#c9c5bd" stroke="#333" /><path d="M6 12l12 6M18 12L6 18" stroke="#3c3c3c" strokeWidth="1.500" /><path d="M12 12.500l4 2.500-4 2.500-4-2.500z" fill="#3c3c3c" /></Ic></Menu></Active>
      <Menu><Ic s={23}><path d="M1 3l15-1 7 18-18 2z" fill="#26332a" stroke="#71a653" strokeWidth="2" /><path d="M6 7q9-3 10 4 0 5-6 4-3-3 1-5M8 18h10" stroke="#a3b8a6" strokeWidth="1.800" /></Ic></Menu>
      <LockIc s={23} c="#d2d2cb" />
      <BulbIc s={24} f="#22292e" line="#8f9698" lw={1.5} x={<path d="M8.500 5l7 7M15.500 5l-7 7" stroke="#e4e4e4" strokeWidth="2.500" />} />
      <Menu><Ic s={24}><circle cx="10" cy="11" r="10" fill="#a9b1b1" stroke="#dadada" /><circle cx="14" cy="13" r="8" fill="#d4d8d6" stroke="#525a5c" strokeWidth="1.500" /></Ic></Menu>
      <Active className="h-[35px] w-[32px]"><Menu c="#333"><BulbIc s={24} f="#c2c3bd" /></Menu></Active>
      <Menu><BulbIc s={24} f="#cfd27e" x={MarkPlus} /></Menu>
      <Menu><Ic s={25}><ellipse cx="12" cy="20" rx="11" ry="3.500" fill="#111" stroke="#ccc" /><circle cx="12" cy="8" r="7" fill="#e6e6c8" /><path d="M9.500 14h5v6h-5z" fill="#777" />{MarkPlus}</Ic></Menu>
      <Active className="h-[34px] w-[32px]"><Menu c="#333"><Ic s={24}><path d="M1 5l10-4 11 3v13l-11 6-9-7z" fill="#e2e2e2" /><path d="M11 1l11 3-5 2-8-2zM1 5l5 2v7l-5-3zM11 9l6-3v7l-6 3zM6 14l5 2v7l-5-3zM17 13l5-3v7l-5 3z" fill="#151515" /></Ic></Menu></Active>
      <Menu d="d"><Glasses /></Menu>
      <Menu><span className="relative"><Glasses /><span className="absolute bottom-[-3px] left-[-2px] flex size-[14px] items-center justify-center rounded-sm bg-[#b5b5b2]"><Tri s={8} c="#fff" /></span></span></Menu>
      <span className="h-[2px] w-[36px] bg-[#505050]" />
      <Ic s={9}><circle cx="12" cy="12" r="11" fill="#e0e0dc" /></Ic>
      <Ic s={18}><path d="M5 17L22 1" stroke="#bbb" strokeWidth="2" /><circle cx="7" cy="17" r="5" fill="#dcdcd8" /><path d="M7 10v8h8" stroke="#333" strokeWidth="2" /></Ic>
      <Ic s={20}><circle cx="17" cy="4" r="4" fill="#dcdcd8" /><path d="M13 7L3 23l13-12z" fill="#aaa" /></Ic>
      <span className="relative flex h-[18px] w-[22px] justify-end text-[12px] leading-[12px] font-bold text-[#d8d8d8]">12<span className="absolute bottom-0 left-0 size-[7px] rounded-full bg-[#d8d8d8]" /></span>
      <Ic s={20}><path d="M0 13l11-6 9 1 2 10-8 5z" fill="#c4c4c0" /><path d="M17 0l-4 13M10 12l3 3 4-2" stroke="#666" strokeWidth="2" /></Ic>
      <span className="relative flex h-[20px] w-[22px] justify-end text-[12px] leading-[12px] font-bold text-[#f0f0f0]"><span className="absolute bottom-[-2px] left-0"><Ic s={17}><path d="M0 15L10 5h13v17l-9 2z" fill="#a3a39f" /></Ic></span><span className="relative">12</span></span>
      <Ic s={22}><path d="M3 22V3h19M3 20C4 12 10 7 20 4" stroke="#8c9391" strokeWidth="1.200" /><rect x="1" y="1" width="4" height="4" fill="#ccc" /><rect x="20" y="1" width="4" height="4" fill="#ccc" /><rect x="1" y="20" width="4" height="4" fill="#ccc" /></Ic>
      <Ic s={21}><path d="M0 21l8-13 10-4-5 14z" fill="#d5d5d0" /><path d="M18 4l5 14-10 1z" fill="#4478b6" /></Ic>
      <Menu><Ic s={22}><rect width="24" height="24" fill="#e4e2e2" />{[0, 1, 2, 3].map((r) => [0, 1, 2, 3].map((c) => ((r + c) % 2 ? <rect key={r + "" + c} x={c * 6} y={r * 6} width="6" height="6" fill={r % 2 ? "#dc9c9c" : "#8faed8"} /> : null)))}</Ic></Menu>
      <Ic s={22}><path d="M12 0l12 12-12 12L0 12z" fill="#4a78ae" /><path d="M12 3.500l7.500 8.500-7.500 8.500L4.500 12z" fill="#dcdcd8" /><path d="M12 3.500v17l7.500-8.500H4.500" stroke="#8e9698" /></Ic>
      <Ic s={22}><path d="M2 3q5 3 8 1h4q4 2 8-1 2 3-1 9 2 6 1 9-4-1-7-1H9q-4 0-7 2-1-4 1-10Q1 6 2 3z" fill="#c9cfc2" stroke="#64a336" strokeWidth="2.200" /><path d="M8 8h8v8H8z" fill="#8e948b" /></Ic>
      <Ic s={23}><path d="M13 13L19 1M13 13l6 10M13 13H1" stroke="#b7bbb8" strokeWidth="2.200" /><circle cx="13" cy="12.500" r="4" fill="#e4e4e0" /></Ic>
      <Tri d="d" s={12} />
    </VTrack>
  </div>
);

const Viewport = () => (
  <div className="relative h-[934px] w-[900px] overflow-hidden">
    <svg width="900" height="934" viewBox="51 289 900 934" className="absolute inset-0" fill="none">
      <rect x="51" y="289" width="900" height="934" fill="url(#sky)" />
      <g stroke="#60747f" strokeWidth="1.500" opacity=".6">
        <path d="M98 289L52 408M230 289L51 996M361 289L252 1223M626 289L765 1223M757 289L951 970M889 289L951 438" />
        <path d="M51 324.500L951 317M51 407L951 400M51 504L951 496M51 620L951 612M51 935L951 924M51 1158L951 1146" />
      </g>
      <g stroke="#60747f" strokeWidth="2.600" opacity=".65"><path d="M494 289L508.500 1223M51 759.500L951 752" /></g>
      <g fontFamily="Noto Sans" fontWeight="700" fontSize="70" textAnchor="middle" opacity=".9">
        <text transform="translate(462.500 746) scale(1.220 1)" fill="#957d80">0</text>
        <text transform="translate(515 790) rotate(90) scale(1 1.320)" fill="#7b80a4">0</text>
      </g>
    </svg>
    <svg
      width="1000"
      height="1000"
      viewBox="-500 -500 1000 1000"
      className="absolute top-0 left-0 max-w-none origin-top-left overflow-visible [transform:matrix3d(1,-0.0082,0,0,-0.239,0.5358,0,-0.00056,0,0,1,0,451,466,0,1)_translate(-500px,-500px)]"
    >
      <text x="5.500" y="356" fontSize="972" textAnchor="middle" fontFamily="Lato" fontWeight="700" fill="#a5a5a5" stroke="#8d8a8a" strokeWidth="1.500">3</text>
    </svg>
    <div className="absolute top-[465px] left-[449px] size-[3px] bg-[#2a2aff]" />
    <div className="absolute top-[8px] right-[7px] flex gap-[9px] text-[15.4px] leading-none text-[#d5dde0]">
      {["Persp", "No cam"].map((t) => (
        <span key={t} className="flex h-[30px] items-center gap-[5px] rounded-full border-2 border-[#9aa3a7] bg-[#5f6f77] px-[10px] pb-[2px]">{t}<Tri d="d" s={9} c="#fff" /></span>
      ))}
    </div>
    <div className="absolute right-[4px] bottom-0 left-0 h-[64px] bg-white/10 pt-[9px] pl-[12px] text-[15.8px] leading-[22px] whitespace-pre text-[#2e3436]">
      <div>Left mouse tumbles. Middle pans. Right dollies. Ctrl+Alt+Left box-zooms. Ctrl+Right zooms. Spacebar-Ctrl-Left tilts.</div>
      <div>Hold L for alternate tumble, dolly, and zoom.    M or Alt+M for First Person Navigation.</div>
      <svg width="34" height="40" viewBox="0 0 34 40" className="absolute top-[22px] left-[20px] overflow-visible" fill="none">
        <path d="M2 20h16" stroke="#d99" /><path d="M2 20V12" stroke="#9d9" />
        <text x="1" y="11" fontSize="15" fill="#6fdc7c">y</text><text x="21" y="19" fontSize="15" fill="#e58a8a">x</text><text x="1" y="34" fontSize="15" fill="#8488ea">z</text>
      </svg>
    </div>
  </div>
);

const Splitter = ({ w, tone = "bg-[#484848]" }: { w: string; tone?: string }) => (
  <div className={"flex shrink-0 flex-col items-center overflow-hidden border-l-2 border-[#111] pt-[480px] " + w + " " + tone}>
    <Tri d="l" s={8} />
    <div className="my-[28px] h-[30px]"><Grip /><Grip /></div>
    <Tri d="r" s={8} />
  </div>
);

const ScenePane = () => (
  <div className="flex w-[990px] shrink-0 flex-col">
    <PaneTabs tabs={[["Scene View", 125], ["Animation Editor", 160], ["Render View", 132], ["Composite View", 153], ["Motion FX View", 147], ["Geometry Spreadsh…", 187]]} end="pl-[11px] pr-[10px]" />
    <PathBar
      lead="w-[82px] pl-[8px]"
      field="w-[704px]"
      tail={
        <Track from={786} at={[812, 847, 899, 934, 971]}>
          <PinIc />
          <TargetIc />
          <Menu d="d"><Cube s={26} /></Menu>
          <Menu d="d"><Ic s={27}><path d="M3 12V4q0-3 4-3t4 3v8q3 6-1 9H4q-4-3-1-9z" fill="#5d5d5d" stroke="#929292" /><circle cx="16" cy="10" r="6" fill="url(#blueball)" /></Ic></Menu>
          <Menu d="d"><span className="h-[22px] w-[22px] bg-[#d9d9d9]" /></Menu>
        </Track>
      }
    />
    <ViewToolbar />
    <div className="flex h-[934px]">
      <LeftTools />
      <Viewport />
      <RightTools />
    </div>
  </div>
);

/* ---------- network editor ---------- */

const Pushpin = () => (<Ic s={30}><path d="M9 15l-6 7" stroke="#777" strokeWidth="1.800" /><path d="M7 10q6-1 8-6 1-3 4-1l3 3q1 3-2 3-4 1-5 8-2 3-5 0l-3-3q-2-3 0-4z" fill="#35b9bd" /><path d="M15 4q2-2 4 0l3 3M9 11q5-1 7-4" stroke="#9cecee" strokeWidth="1.500" /></Ic>);
const ClockMark = () => (<Ic s={16}><rect x="1" y="1" width="22" height="22" rx="8" fill="#8dc069" /><circle cx="12" cy="12" r="8" fill="#0d0d0d" /><path d="M12 6v6l-3 3" stroke="#8dc069" strokeWidth="2" /></Ic>);

type NodeProps = { x: number; y: number; icon: N; name: string; sub?: string; pre?: string; marks?: N; ins?: [number, number][]; outs?: [number, number][]; tone?: string; flag?: boolean; sel?: boolean };
const Dot = ({ x, y, pink }: { x: number; y: number; pink?: boolean }) => (
  <span className={"absolute size-[12px] rounded-full " + (pink ? "bg-[#d977dc]" : "bg-[#b4b4b4]")} style={{ left: x - 6, top: y - 6 }} />
);
const Node = ({ x, y, icon, name, sub, pre, marks, ins = [], outs = [], tone, flag, sel }: NodeProps) => (
  <div className="absolute h-[36px] w-[117px]" style={{ left: x - 1000, top: y - 278 }}>
    {sel && <div className="absolute -inset-[4px] rounded-[8px] border-[3px] border-[#d79a9c] bg-[#181818]" />}
    {tone && <div className="absolute top-[6px] left-[7px] h-full w-full rounded-[5px] border border-[#8ab873] bg-[#d5f3c4]" />}
    {tone && <div className="absolute top-[3px] left-[3px] h-full w-full rounded-[5px] bg-[#5c8048]" />}
    <div className={"relative flex h-full w-full items-center justify-center overflow-hidden rounded-[6px] border border-[#999] " + (tone ?? "bg-[#cdcdcd]")}>
      <svg width="117" height="36" viewBox="0 0 117 36" className="absolute inset-0" stroke="#777" strokeWidth="1.200">
        {flag && <path d="M101 0h16v36H98z" fill="#00aef3" stroke="none" />}
        <path d="M17 1l-3 33M34 1l-3 33M87 1l-3 33" />{!flag && <path d="M102 1l-3 33" />}
      </svg>
      <span className="relative">{icon}</span>
    </div>
    {ins.map(([dx, p]) => (<Dot key={"i" + dx} x={dx} y={-9} pink={!!p} />))}
    {outs.map(([dx, p]) => (<Dot key={"o" + dx} x={dx} y={45} pink={!!p} />))}
    {pre && <div className="absolute -top-[25px] left-[128px] text-[19.8px] leading-[30px] whitespace-nowrap text-[#5c5c5c]">{pre}</div>}
    <div className="absolute top-[2px] left-[128px] text-[23px] leading-[30px] whitespace-nowrap text-[#cacaca]">{name}</div>
    <div className="absolute top-[37px] left-[133px] flex h-[15px] items-center gap-[8px]">{marks}</div>
    {sub && <div className={"absolute left-[128px] text-[19.3px] leading-[24px] whitespace-nowrap text-[#6e9fdd] " + (marks ? "top-[59px]" : "top-[44px]")}>{sub}</div>}
  </div>
);

const three: [number, number][] = [[27, 0], [58, 1], [89, 0]];
const GreyLock = () => <LockIc s={16} c="#596463" />;

const NetCanvas = () => (
  <div className="relative h-[945px] w-full overflow-hidden bg-[#303030]">
    <div className="absolute top-[20px] right-[17px] text-[34px] leading-[48px] font-bold text-[#4f4f4f]">Geometry</div>
    <svg width="777" height="945" viewBox="1000 278 777 945" className="absolute inset-0" fill="none">
      <circle cx="1487" cy="864.500" r="58" fill="#44679c" /><circle cx="1487" cy="864.500" r="39" fill="#9172cc" />
      <g stroke="#4c7cb8" strokeWidth="1.800">
        <path d="M1124 499l-23 76M1124 629l-31 75M1489.500 776l-2.500 61" /><path d="M1093 759v75M1093 889v75" stroke="#466c9c" /><path d="M1155 759v75M1155 889v75" strokeDasharray="3 3" stroke="#466c9c" />
      </g>
      <path d="M1124 759v75M1124 889v75" stroke="#d06fd4" strokeWidth="2" />
    </svg>
    <Node x={1066} y={454} name="grid1" icon={<Ic s={28}><path d="M5 10h14l3 8H2z" fill="#b4b8c0" stroke="#7d838d" /></Ic>} outs={[[58, 0]]} />
    <Node x={1066} y={584} name="group1" sub="Edge" icon={<Ic s={30}><circle cx="12" cy="12" r="10.500" fill="#eee9e4" stroke="#d8923c" strokeWidth="2.200" /></Ic>} ins={[[35, 0], [81, 0]]} outs={[[58, 0]]} />
    <Node x={1066} y={714} pre="Vellum Constraints" name="vellumcloth1" sub="cloth" marks={<GreyLock />} icon={<Pushpin />} ins={three} outs={three} />
    <Node x={1066} y={844} name="vellumconstraints1" sub="pin" marks={<GreyLock />} icon={<Pushpin />} ins={three} outs={three} />
    <Node
      x={1066} y={974} name="vellumsolver1" tone="bg-[#b2e394]" ins={three} outs={three}
      marks={<><Ic s={18}><path d="M3 10L0 22h24l-4-12z" fill="#3c5a26" /><path d="M12 1v13M6 10l6 6 6-6" stroke="#cfe0bd" strokeWidth="2.200" /></Ic><ClockMark /><GreyLock /></>}
      icon={<Ic s={29}><circle cx="17" cy="12" r="7" fill="#e08c8c" /><path d="M1 22C4 18 5 7 14 4c4-1 5 1 8 2-5 0-8 4-9 9-3-1-5 3-6 6z" fill="#b9dbe0" stroke="#7c9398" /></Ic>}
    />
    <Node x={1431} y={732} sel name="font1" marks={<ClockMark />} icon={<TIc s={30} />} outs={[[58, 0]]} />
    <Node x={1428} y={847} flag name="transform1" marks={<ClockMark />} icon={<Ic s={28}><path d="M1 6l8 1 7-1 7 1-3 5 3 6-9 2-5-2-7 2 1-6z" fill="#3c6298" /><path d="M4 7h16v3H4zM4 15h16v3H4z" fill="#27436e" /><circle cx="13" cy="9" r="6" fill="url(#ball)" /></Ic>} ins={[[59, 0]]} outs={[[59, 0]]} />
  </div>
);

const NetPane = () => (
  <div className="flex w-[777px] shrink-0 flex-col border-r border-[#111]">
    <PaneTabs tabs={[["/obj/cloth", 117], ["/obj/Flower1", 135], ["Tree View", 116], ["Material Palette", 151]]} styles={["italic text-[#a9a9a9]", "font-bold text-[#d0d0d0]"]} end="pl-[13px] pr-[9px]" />
    <PathBar lead="w-[82px] pl-[8px]" field="w-[614px]" tail={<Track from={1696} at={[1722, 1757]}><PinIc /><TargetIc /></Track>} />
    <div className="flex h-[38px] shrink-0 items-center border-b-2 border-[#0e0e0e] bg-gradient-to-b from-[#3d3d3d] to-[#333]">
      <div className="flex h-full w-[17px] items-start justify-center border-r-2 border-[#0c0c0c] bg-[#444] pt-[3px]"><Tri d="u" s={10} c="#000" /></div>
      <Track from={1017} at={[1070, 1124, 1173, 1226, 1289.500, 1361, 1426, 1482.500, 1532, 1568, 1604, 1639, 1676, 1712, 1745, 1764]} className="pt-[2px] text-[17.2px] text-[#c9c9c9]">
        {["Add", "Edit", "Go", "View", "Tools", "Layout", "Labs", "Help"].map((m) => (<span key={m}>{m}</span>))}
        <Ic s={24}><path d="M2 3l19 19M21 3L4 21" stroke="#c9c9c5" strokeWidth="3.500" /><circle cx="5" cy="5" r="3" fill="#c9c9c5" /><path d="M17 2l5 5" stroke="#c9c9c5" strokeWidth="4" /></Ic>
        <Ic s={20}><path d="M5 2v19M5 7h9M5 14h9M5 21h9" stroke="#9fa5a0" strokeWidth="2" /><path d="M1 1h8v4H1zM13 5h8v4h-8zM13 12h8v4h-8zM13 19h8v4h-8z" fill="#b9beb9" /></Ic>
        <span className="flex h-[22px] w-[19px] flex-col justify-around bg-[#e2e2de]">{[1, 2, 3, 4].map((i) => (<span key={i} className="h-px bg-[#8b8b88]" />))}</span>
        <span className="grid h-[21px] w-[20px] grid-cols-3 gap-px bg-[#eee] p-[2px]">{["bg-[#d22]", "bg-[#e85a17]", "bg-[#f0c020]", "bg-[#2a58b8]", "bg-[#3ba63b]", "bg-[#9ad030]", "bg-[#111]", "bg-[#888]", "bg-[#ddd]"].map((c) => (<span key={c} className={c} />))}</span>
        <span className="grid h-[22px] w-[21px] grid-cols-2 gap-[2px] border-2 border-[#a5a5a5] p-[2px]">{[1, 2, 3, 4, 5, 6].map((i) => (<span key={i} className="border-b border-[#ccc] bg-[#666]" />))}</span>
        <Ic s={22}><rect x="1" y="1" width="22" height="22" fill="#dcdcd8" /><path d="M1 3h22" stroke="#555" strokeWidth="2" /><rect x="4" y="7" width="9" height="5" stroke="#111" strokeWidth="2" /><rect x="11" y="15" width="9" height="5" stroke="#111" strokeWidth="2" /><path d="M8 12v6h3" stroke="#111" /></Ic>
        <Ic s={22}><path d="M4 1h16v18l-5 4H4z" fill="#e4cf3e" /><path d="M7 5h12M7 9h12M7 13h7" stroke="#5b5113" strokeWidth="1.800" /></Ic>
        <Tri s={12} c="#8f8f8f" />
      </Track>
    </div>
    <NetCanvas />
  </div>
);

/* ---------- parameter editor ---------- */

const mono = "font-['DejaVu_Sans_Mono',monospace] text-[15.8px] tracking-[1.3px]";
const Field = ({ v, className = "flex-1" }: { v: string; className?: string }) => (
  <div className={"flex h-full items-center border-2 border-t-[4px] border-[#2a2a2a] bg-[#131313] pl-[3px] text-[#dcdcdc] " + mono + " " + className}>{v}</div>
);
const Row = ({ label, children, className = "mb-[3.500px] h-[34px]" }: { label?: string; children: N; className?: string }) => (
  <div className={"flex shrink-0 items-center text-[16px] text-[#bdbdbd] " + className}>
    <div className="w-[209px] shrink-0 text-right">{label}</div>
    <div className="ml-[21px] flex h-full w-[516px] items-center gap-[4px]">{children}</div>
  </div>
);
const Select = ({ v, w }: { v: string; w: string }) => (
  <div className={"flex h-full border border-b-2 border-[#1d1d1d] text-[15.6px] " + w}>
    <div className="flex flex-1 items-center bg-gradient-to-b from-[#555] to-[#404040] pb-px pl-[22px] text-[#c4c4c4]">{v}</div>
    <div className="flex w-[33px] items-center justify-center bg-gradient-to-b from-[#3a3a3a] to-[#262626]"><Updown /></div>
  </div>
);
const Check = ({ on, text, className }: { on?: boolean; text: string; className: string }) => (
  <Row className={"h-[20px] " + className}>
    <div className="flex h-[20px] w-[21px] items-center justify-center border-2 border-[#2a2a2a] bg-[#131313]">
      {on && <Ic s={17}><path d="M1 12l5-3 4 7L19 1l4 0L12 24H8z" fill="#e4e4e4" /></Ic>}
    </div>
    <span className="-mt-[3px] ml-[6px] text-[15.9px]">{text}</span>
  </Row>
);
const Slider = ({ at }: { at: number }) => (
  <div className="relative ml-[3px] flex h-full flex-1 items-center pr-[2px]">
    <div className="h-[7px] w-full rounded-full border border-[#222] bg-black"><div className="h-full rounded-l bg-[#0f4f9c]" style={{ width: at }} /></div>
    <div className="absolute top-[1px] h-[31px] w-[9px] border border-[#222] bg-gradient-to-r from-[#b5b5b5] to-[#7f7f7f]" style={{ left: at }} />
  </div>
);

const ParmPane = () => (
  <div className="flex w-[763px] shrink-0 flex-col bg-[#3a3a3a]">
    <PaneTabs tabs={[["font1", 88]]} styles={["italic text-[#a9a9a9]"]} end="pl-[14px] pr-[10px]" />
    <PathBar lead="w-[80px] pl-[7px]" field="w-[602px]" tail={<Track from={2470} at={[2495, 2531]}><PinIc /><TargetIc /></Track>} />
    <div className="mr-[4px] ml-[2px] flex h-[41px] shrink-0 items-center border-b-2 border-[#0a0a0a]">
      <span className="ml-[6px]"><Menu d="d"><TIc s={24} /></Menu></span>
      <span className="ml-[8px] w-[43px] pt-px text-[15.4px] font-bold text-[#cfcfcf]">Font</span>
      <Field v="font1" className="mt-[4px] max-h-[34px] w-[477px] shrink-0" />
      <Track from={2350} at={[2374, 2412, 2452, 2491, 2531]}>
        <Menu d="d"><Ic s={25}>{Array.from({ length: 8 }, (_, i) => (<path key={i} d="M12 8V1" stroke="#d4d4d0" strokeWidth="3" transform={"rotate(" + i * 45 + " 12 12)"} />))}<circle cx="12" cy="12" r="5" stroke="#d4d4d0" strokeWidth="3" fill="#3a3a3a" /></Ic></Menu>
        <Menu d="d"><Ic s={25}><path d="M4 1h6v8l4-1V1h6l-1 22h-6v-9l-4 1v8H3z" fill="#10294b" stroke="#c9cfd6" strokeWidth="1.600" /></Ic></Menu>
        <Ic s={25}><circle cx="10" cy="10" r="8" fill="#53626b" stroke="#c4c8c8" strokeWidth="2" /><path d="M15 16l6 7" stroke="#c4c8c8" strokeWidth="3" /></Ic>
        <HelpIc ch="i" />
        <HelpIc />
      </Track>
    </div>
    <Row label="Primitive Type" className="mt-[6px] h-[32px]"><Select v="Polygons Only" w="w-[277px]" /></Row>
    <Row label="Font" className="mt-[8px] h-[33px]">
      <Field v="Lato Bold" className="w-[447px]" />
      <span className="flex h-[30px] w-[27px] items-center justify-center self-start border border-[#222] bg-gradient-to-b from-[#444] to-[#2c2c2c]"><Tri d="d" s={10} /></span>
      <span className="ml-[7px]"><Ic s={23}><path d="M4 2h12v16H4z" fill="#9b9b9b" /><path d="M10 7v14l4-3 3 5 2-1-2-5h4z" fill="#1a1a1a" stroke="#ddd" strokeWidth="1.500" /></Ic></span>
    </Row>
    <div className="mt-[11px] ml-[29px] h-[29px] shrink-0 text-[16px] leading-[27px] text-[#bdbdbd]">Text</div>
    <div className={"ml-[24px] flex h-[186px] w-[723px] shrink-0 border-t-2 border-[#2a2a2a] " + mono}>
      <div className="w-[44px] bg-[#2f2f2f] pt-px pr-[2px] text-right leading-[22px] text-[#bdbdbd]">1</div>
      <div className="flex-1 bg-[#131313] pl-[6px]"><span className="inline-block h-[23px] bg-[#b98420] leading-[23px] font-bold text-[#18120a]">`rint($F/25)`</span></div>
      <div className="flex w-[22px] flex-col border-l border-[#222] bg-[#353535]">
        <div className="flex h-[130px] items-center justify-center border-b border-[#252525] text-black"><Grip dark /></div>
        <div className="flex flex-1 items-center justify-center border-b border-[#2b2b2b]"><Tri d="u" s={9} c="#4c4c4c" /></div>
        <div className="flex flex-1 items-center justify-center"><Tri d="d" s={9} c="#4c4c4c" /></div>
      </div>
    </div>
    <div className="ml-[24px] flex h-[21px] w-[701px] shrink-0 bg-[#353535]">
      <div className="flex flex-1 items-center justify-center border-r border-[#2a2a2a]"><Grip dark /></div>
      <div className="flex w-[54px] items-center justify-around"><Tri d="l" s={9} c="#4c4c4c" /><Tri d="r" s={9} c="#4c4c4c" /></div>
    </div>
    <div className="ml-[24px] flex h-[33px] w-[722px] shrink-0 border-2 border-[#c8c8c8]">
      <div className="flex-1 border-r-2 border-[#a8a8a8]" />
      <div className="flex w-[155px] items-center justify-center pr-[5px] text-[15.8px] tracking-[-0.3px] text-[#bdbdbd]">Ln 1, Col 1</div>
    </div>
    <Row label="Horizontal Alignment" className="mt-[30px] h-[32px]"><Select v="Center" w="w-[125px]" /></Row>
    <Row label="Vertical Alignment" className="mt-[7px] mb-[10px] h-[32px]"><Select v="Middle" w="w-[142px]" /></Row>
    <Check text="Include Descender in Vertical Alignment" className="mb-[7px]" />
    <Row label="Origin"><Field v="0" /><Field v="0" /><Field v="0" /></Row>
    <Row label="Rotate"><Field v="0" /><Field v="0" /><Field v="0" /></Row>
    <Row label="Scale"><Field v="1" /><Field v="1" /></Row>
    <Row label="Tracking"><Field v="0" /><Field v="0" /></Row>
    <Row label="Font Size"><Field v="1" className="w-[111px]" /><Slider at={0} /></Row>
    <Row label="Oblique Angle"><Field v="0" className="w-[111px]" /><Slider at={193} /></Row>
    <Row label="Level of Detail"><Field v="1" className="w-[111px]" /><Slider at={74} /></Row>
    <Check on text="Automatic Kerning" className="mt-[5px]" />
    <Check on text="Hole Faces" className="mt-[11px]" />
    <Check text="Add Text Attributes" className="mt-[12px]" />
  </div>
);

/* ---------- playbar and status ---------- */

const Btn = ({ children, className = "h-[40px] w-[40.500px]", on }: { children?: N; className?: string; on?: boolean }) => (
  <div className={"flex shrink-0 items-center justify-center border-r-2 border-b-2 border-[#111] pl-[2px] " + (on ? "bg-gradient-to-b from-[#506888] to-[#7690b2] " : "bg-gradient-to-b from-[#535353] to-[#404040] ") + className}>{children}</div>
);
const Glyph = ({ d, w = 28 }: { d: string; w?: number }) => (<svg width={w} height="16" viewBox={"0 0 " + w + " 16"}><path d={d} fill="#d4d4d0" /></svg>);
const NumBox = ({ v, className }: { v: string; className: string }) => (
  <div className={"flex items-center border-2 border-[#262626] pl-[2px] text-[#d8d8d8] " + mono + " " + className}>{v}</div>
);

const Timeline = () => {
  const px = (f: number) => 353 + (f - 1) * 7.63;
  const marks = Array.from({ length: 40 }, (_, i) => (i + 1) * 6);
  return (
    <svg width="1832" height="52" viewBox="352 1226 1832 52" fill="none" className="font-['Noto_Sans',sans-serif]">
      <rect x="353" y="1246" width="267" height="12" fill="#0f69c4" />
      <path d="M353 1260h1830" stroke="#a9a9a9" strokeWidth="2" />
      {marks.map((f) => (<path key={f} d={f % 24 ? "M0 1253v14" : "M0 1249v22"} transform={"translate(" + px(f) + " 0)"} stroke="#949494" strokeWidth="1.300" />))}
      {[1, 24, 48, 72, 96, 120, 144, 168, 192, 216].map((f) => (<text key={f} x={px(f) + (f === 1 ? 3 : 0)} y="1240.500" fontSize="13.700" fill="#919191">{f}</text>))}
      <text x={px(240)} y="1240.500" fontSize="13.700" fill="#919191">2</text>
      <path d="M815 1229h37v25h-10l-9 8-9-8h-9z" fill="#000" stroke="#cfcfcf" strokeWidth="1.800" />
      <text x="833.500" y="1249" fontSize="16.500" textAnchor="middle" fill="#f2f2f2">64</text>
    </svg>
  );
};

const Playbar = () => (
  <div className="flex h-[107px] shrink-0 border-b-2 border-[#0c0c0c] bg-[#303030]">
    <div className="flex w-[15px] flex-col items-center justify-end border-r-2 border-[#0c0c0c] bg-[#444] pb-[3px]"><Tri d="d" s={10} c="#000" /></div>
    <div className="flex w-[2169px] flex-col border-t-2 border-[#5a5a5a] pl-[7px]">
      <div className="flex h-[61px]">
        <div className="flex w-[330px] items-center pt-[4px]">
          <Btn><Glyph w={30} d="M1 1h4v14H1zM16 1v14L6 8zM29 1v14L17 8z" /></Btn>
          <Btn><Glyph w={18} d="M17 0v16L1 8z" /></Btn>
          <Btn on><span className="h-[17px] w-[20px] bg-[#d4d4d0]" /></Btn>
          <Btn><Glyph w={18} d="M1 0v16L17 8z" /></Btn>
          <Btn><Glyph w={30} d="M1 1v14l11-7zM13 1v14l11-7zM25 1h4v14h-4z" /></Btn>
          <NumBox v="64" className="ml-[6px] h-[41px] w-[70px] bg-[#131313]" />
          <Btn className="ml-[3px] h-[41px] w-[21px]"><Glyph w={14} d="M10 3v10L1 8zM11 3h2v10h-2z" /></Btn>
          <Btn className="h-[41px] w-[21px]"><Glyph w={14} d="M1 3h2v10H1zM4 3v10l9-5z" /></Btn>
        </div>
        <Timeline />
      </div>
      <div className="flex h-[42px] items-center">
        <Btn className="h-[36px] w-[40.500px]"><Ic s={26}><rect x="2" y="2" width="17" height="4" fill="#9b9b9b" /><rect x="2" y="7" width="17" height="13" fill="#dadad6" /><path d="M11 8v15l4-4 3 4 2-1-2-5h5z" fill="#111" stroke="#ddd" strokeWidth="1.200" /></Ic></Btn>
        <Btn className="h-[36px] w-[40.500px]"><Ic s={26}><path d="M0 8h6l10-6v20l-10-6H0z" fill="#5a6870" /><ellipse cx="17" cy="12" rx="5" ry="10" fill="#39434a" stroke="#d0d4d4" strokeWidth="1.800" /><circle cx="14" cy="13" r="2.500" fill="#dadada" /></Ic></Btn>
        <Btn className="h-[36px] w-[40.500px]"><Menu d="d"><Ic s={26}><path d="M4 10c3-8 18-5 18 6" stroke="#e0e0dc" strokeWidth="2.500" /><path d="M1 13V5l10 1z" fill="#e0e0dc" /><path d="M2 12l20 5v3H2z" stroke="#e0e0dc" strokeWidth="1.800" /></Ic></Menu></Btn>
        <Btn className="h-[36px] w-[40.500px]"><Ic s={26}><circle cx="12" cy="12" r="9.500" fill="#4f5459" stroke="#dcdcd8" strokeWidth="2.200" /><circle cx="12" cy="12" r="6.500" fill="#4f5459" stroke="#9a9e9e" /><path d="M12 7v6h5M8 12h4" stroke="#fff" strokeWidth="2" /></Ic></Btn>
        <Btn className="h-[36px] w-[40.500px]"><Menu><Ic s={26}><path d="M0 5v14M24 5v14M5 5v5M9 5v3M12 4v9M15 5v3M19 5v5" stroke="#9fa5a5" strokeWidth="2" /></Ic></Menu></Btn>
        <div className="ml-[6px] flex h-[36px] w-[69px] items-center justify-around border border-[#222] bg-[#373737]">
          <svg width="16" height="12" viewBox="0 0 16 12"><path d="M1 0h3v12H1z" fill="#3e5237" /><path d="M15 0v12L6 6z" fill="#595959" /></svg>
          <svg width="16" height="12" viewBox="0 0 16 12"><path d="M12 0h3v12h-3z" fill="#3e5237" /><path d="M1 0v12l9-6z" fill="#595959" /></svg>
        </div>
        <NumBox v="1" className="ml-[54px] h-[32px] w-[63px] bg-[#242424]" />
        <NumBox v="1" className="ml-[6px] h-[32px] w-[62px] bg-[#131313]" />
        <div className="ml-[2px] flex flex-1 items-center">
          <svg width="10" height="18" viewBox="0 0 10 18"><path d="M0 0l10 9-10 9z" fill="#b4b4b4" /></svg>
          <div className="h-[5px] flex-1 bg-[#7c7c7c]" />
          <svg width="10" height="18" viewBox="0 0 10 18"><path d="M10 0L0 9l10 9z" fill="#b4b4b4" /></svg>
        </div>
        <NumBox v="240" className="ml-[2px] h-[32px] w-[63px] bg-[#131313]" />
        <NumBox v="240" className="mr-px ml-[4px] h-[32px] w-[63px] bg-[#242424]" />
      </div>
    </div>
    <div className="flex flex-1 items-center border-t-2 border-[#5a5a5a] pt-px text-[15.600px] text-[#c4c4c4]">
      <div className="ml-[4px] flex w-[81px] items-center">
        <div className="relative z-10 flex size-[60px] shrink-0 items-center justify-center rounded-full border border-[#1c1c1c] bg-[#393939]">
          <Ic s={28}><circle cx="15" cy="6" r="4.500" stroke="#6b6b6b" strokeWidth="2.500" /><path d="M13 9L5 22M7 17l4 2M5 20l3 3" stroke="#6b6b6b" strokeWidth="2.500" /></Ic>
        </div>
        <div className="-ml-[3px] flex h-[30px] w-[25px] items-center justify-center border border-[#1c1c1c] bg-[#3a3a3a]"><Tri d="d" s={9} /></div>
      </div>
      <div className="ml-[11px] flex flex-col gap-[6px]">
        <Btn className="h-[36px] w-[36px]"><Menu><Ic s={23}><rect x="1" y="1" width="17" height="22" fill="#9d9d9d" /><rect x="1" y="6" width="4" height="4" fill="#d22" /><rect x="1" y="11" width="4" height="4" fill="#3b78c4" /><rect x="1" y="16" width="4" height="4" fill="#7ac524" /><path d="M8 12c1-6 10-7 12-1M22 13c-1 6-10 7-12 1" stroke="#222" strokeWidth="4.500" /><path d="M8 12c1-6 10-7 12-1M22 13c-1 6-10 7-12 1" stroke="#fff" strokeWidth="2.200" /></Ic></Menu></Btn>
        <Btn className="h-[36px] w-[36px]"><Ic s={23}><rect width="24" height="24" fill="#000" /><path d="M2 12q4 18 9 0t7-8l5 8" stroke="#4f86c6" strokeWidth="1.500" /><path d="M1 13q5-12 10 0 5 8 12-2" stroke="#d58a2c" strokeWidth="1.500" /><path d="M1 12h22" stroke="#ddd" strokeWidth="1.500" /></Ic></Btn>
      </div>
      <div className="ml-[8px] flex flex-col gap-[9px]">
        <Btn className="h-[35px] w-[229px] !justify-between pr-[8px] !pl-[26px]">0 keys, 0/0 channels<Tri d="u" s={11} /></Btn>
        <div className="-ml-[3px] flex h-[32px] w-[229px] border-b-2 border-[#111]">
          <div className="flex flex-1 items-center bg-gradient-to-b from-[#555] to-[#404040] pl-[21px]">Key All Channels</div>
          <div className="flex w-[33px] items-center justify-center bg-[#333]"><Updown /></div>
        </div>
      </div>
    </div>
  </div>
);

const StatusBar = () => (
  <div className="flex h-[39px] shrink-0 items-stretch justify-end border-b border-[#4a3638] bg-[#191919] text-[15.6px] text-[#c4c4c4]">
    <div className="flex w-[39px] items-center justify-center bg-[#3b3b3b]"><Menu><Ic s={24}><path d="M1 12C0 5 6 1 12 2c7 1 10 6 9 11-1 3-2 3-2 8l-3 1c0-3-2-4-4-4-5 1-10-1-11-6z" fill="#cdcdc9" /><path d="M5 6q3 2 3 6M11 4q3 4 2 10M17 7q1 4-1 8" stroke="#a2a29a" strokeWidth=".8" /></Ic></Menu></div>
    <div className="flex w-[156px] items-center justify-end border-l border-[#6a6a6a] bg-gradient-to-b from-[#505050] to-[#404040] pr-[8px] tracking-[0.45px]">/obj/cloth/vell…</div>
    <div className="flex w-[36px] items-center justify-center bg-[#2a2a2a]"><Updown /></div>
    <div className="flex w-[42px] items-center justify-center bg-[#363636]"><Ic s={23}><path d="M4 10c1-7 12-8 15-2M20 14c-1 7-12 8-15 2" stroke="#6e6e6e" strokeWidth="2.500" /><path d="M21 3v7h-7zM3 21v-7h7z" fill="#6e6e6e" /></Ic></div>
    <div className="flex w-[140px] items-center justify-center border-l border-[#6a6a6a] bg-gradient-to-b from-[#505050] to-[#404040]">Auto Update</div>
    <div className="flex w-[36px] items-center justify-center bg-[#2a2a2a]"><Updown /></div>
  </div>
);

export default function App() {
  return (
    <div className="flex h-[1369px] w-[2560px] flex-col overflow-hidden bg-[#3a3a3a] font-['Noto_Sans',sans-serif] text-[#c8c8c8]">
      <Defs />
      <TitleBar />
      <MenuBar />
      <Shelves />
      <div className="flex h-[1063px] shrink-0">
        <ScenePane />
        <Splitter w="w-[10px]" />
        <NetPane />
        <Splitter w="w-[11px]" />
        <ParmPane />
        <Splitter w="w-[9px]" tone="bg-[#4c4c4c]" />
      </div>
      <Playbar />
      <StatusBar />
    </div>
  );
}
